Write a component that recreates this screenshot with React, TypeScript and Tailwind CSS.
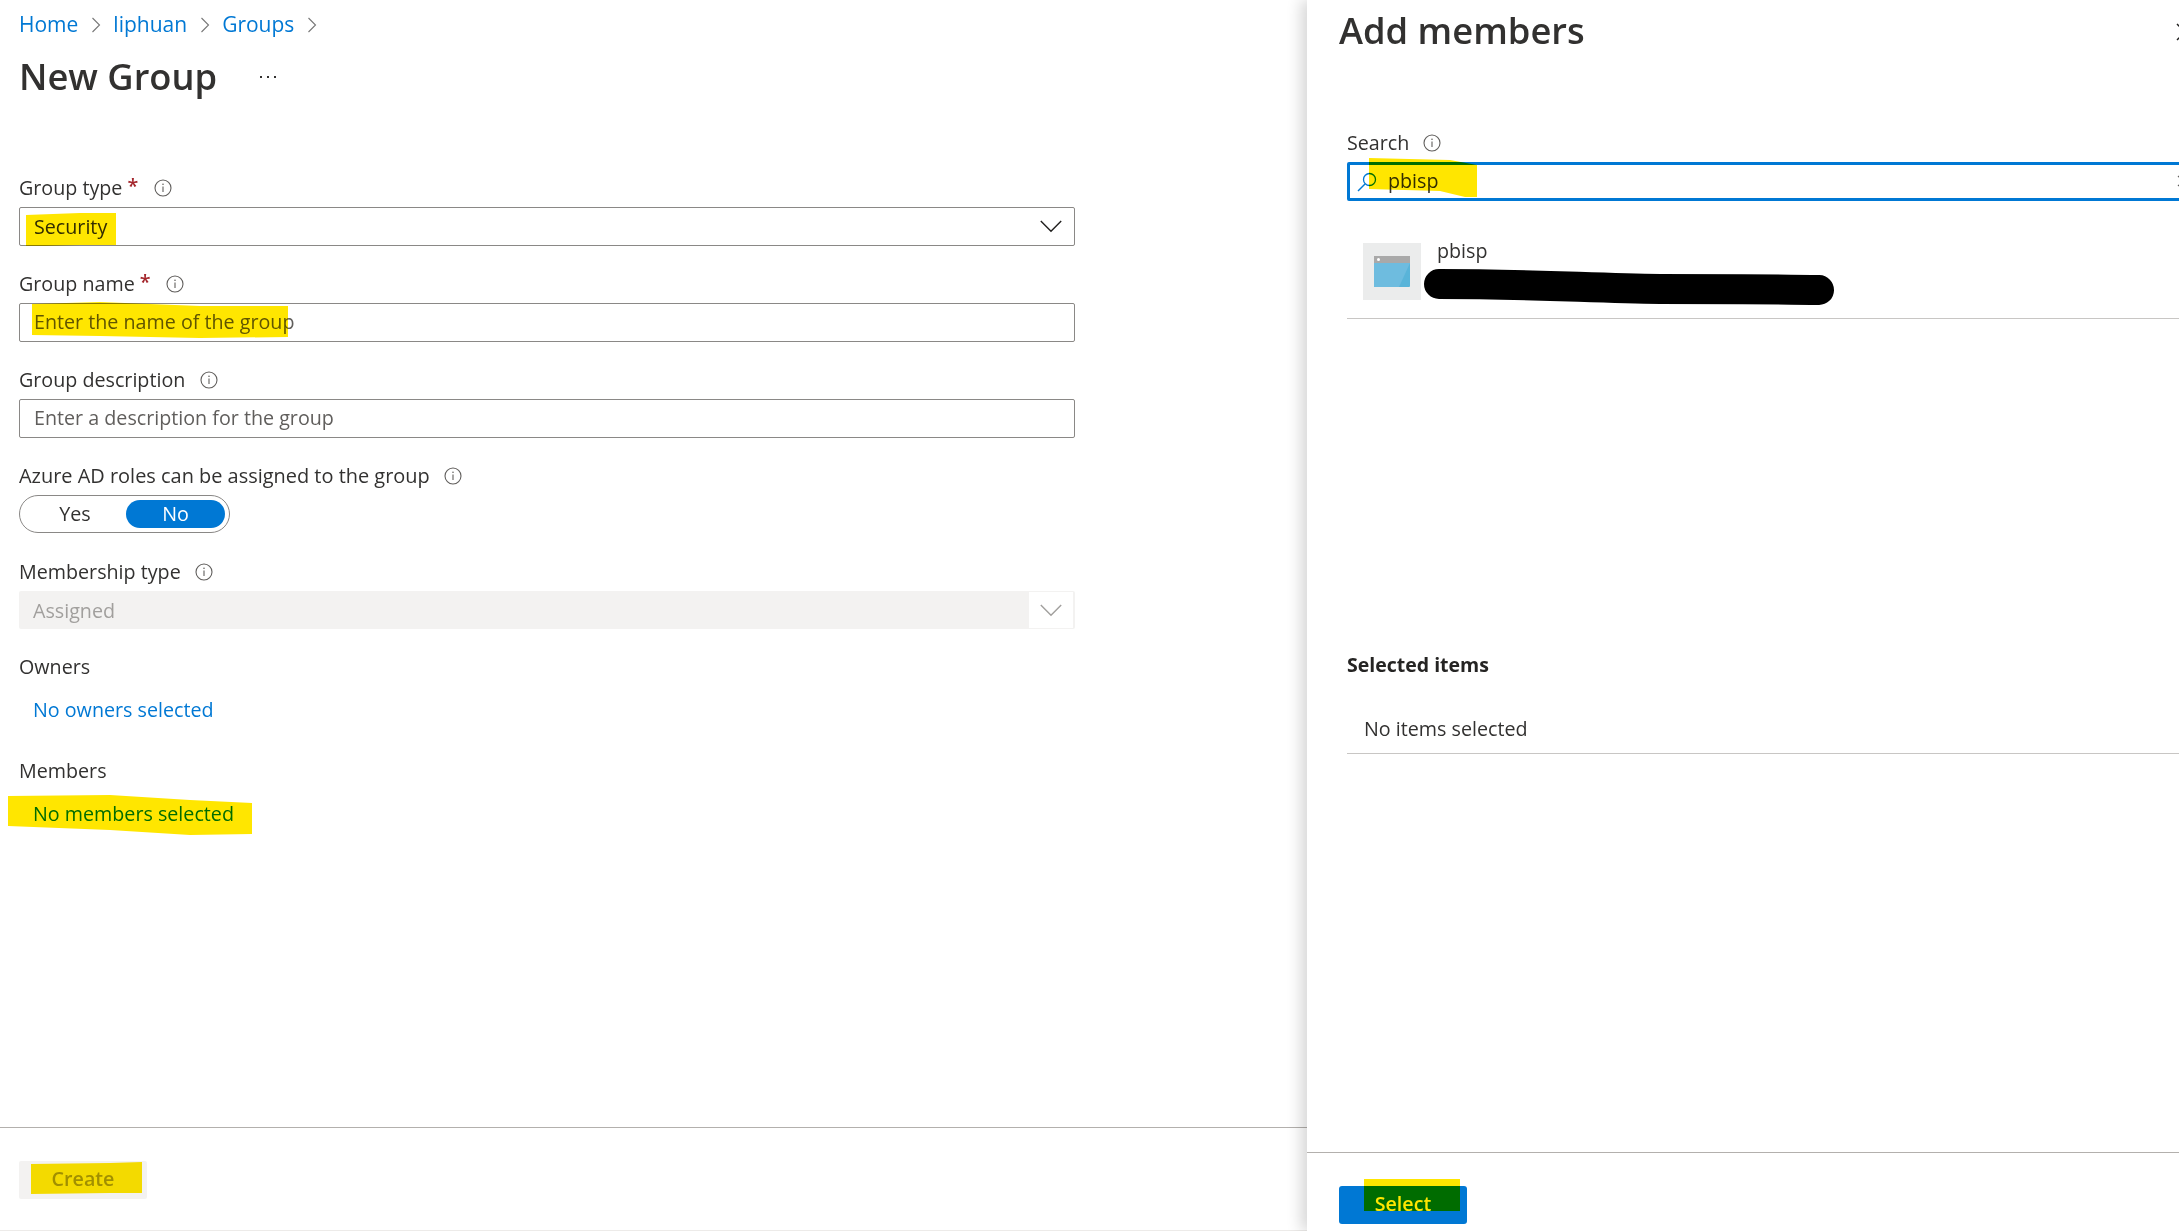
import React from "react";

function Info() {
  return (
    <svg width="18" height="18" viewBox="0 0 18 18" fill="none" className="shrink-0">
      <circle cx="9" cy="9" r="8" stroke="#605e5c" strokeWidth="1.1" />
      <path d="M9 7.6V13" stroke="#605e5c" strokeWidth="1.1" />
      <circle cx="9" cy="5.2" r="0.8" fill="#605e5c" />
    </svg>
  );
}

function Crumb() {
  return (
    <svg width="10" height="16" viewBox="0 0 10 16" fill="none" className="mx-[12.5px]">
      <path d="M1.5 1L8.5 8L1.5 15" stroke="#777" strokeWidth="1.1" />
    </svg>
  );
}

function Chevron({ color }: { color: string }) {
  return (
    <svg width="22" height="13" viewBox="0 0 22 13" fill="none">
      <path d="M0.8 1L11 11.3L21.2 1" stroke={color} strokeWidth="1.4" />
    </svg>
  );
}

function FieldLabel({ text, required, infoGap, size }: { text: string; required?: boolean; infoGap: string; size?: string }) {
  return (
    <div className={"h-[38px] flex items-center text-[#323130] " + (size ?? "")}>
      <span>{text}</span>
      {required && <span className="ml-[5px] font-semibold text-[#a4262c] -mt-[4px]">*</span>}
      <span className={infoGap}>
        <Info />
      </span>
    </div>
  );
}

const boxClass =
  "h-[39px] flex items-center px-[14px] border border-[#8a8886] rounded-[2px] bg-white";

export default function App() {
  return (
    <div
      className="relative w-[2179px] h-[1231px] flex overflow-hidden bg-white text-[19.7px] text-[#323130]"
      style={{ fontFamily: '"Open Sans", "Noto Sans", sans-serif' }}
    >
      {/* Left blade */}
      <div className="w-[1307px] shrink-0 flex flex-col">
        <div className="h-[49px] pl-[19px] flex items-center text-[21px] text-[#0078d4]">
          <span>Home</span>
          <Crumb />
          <span>liphuan</span>
          <Crumb />
          <span>Groups</span>
          <Crumb />
        </div>
        <div className="h-[54px] pl-[19px] flex items-center">
          <span className="text-[36.3px] font-semibold text-[#323130] leading-none">New Group</span>
          <span className="ml-[43px] mt-[2px] flex gap-[5px]">
            <span className="w-[2px] h-[2px] bg-[#323130]" />
            <span className="w-[2px] h-[2px] bg-[#323130]" />
            <span className="w-[2px] h-[2px] bg-[#323130]" />
          </span>
        </div>

        <div className="pl-[19px] mt-[66px] flex-1">
          <div className="w-[1056px]">
            <FieldLabel text="Group type" required infoGap="ml-[16px]" />
            <div className={boxClass + " justify-between pr-[12px]"}>
              <span>Security</span>
              <span className="flex">
                <Chevron color="#201f1e" />
              </span>
            </div>

            <div className="mt-[19px]">
              <FieldLabel text="Group name" required infoGap="ml-[15px]" />
              <div className={boxClass + " pb-[2px] text-[#605e5c]"}>Enter the name of the group</div>
            </div>

            <div className="mt-[19px]">
              <FieldLabel text="Group description" infoGap="ml-[15px]" />
              <div className={boxClass + " pb-[2px] text-[#605e5c]"}>Enter a description for the group</div>
            </div>

            <div className="mt-[19px]">
              <FieldLabel
                text="Azure AD roles can be assigned to the group"
                infoGap="ml-[14px]"
                size="text-[19.95px]"
              />
              <div className="w-[211px] h-[38px] rounded-full border border-[#8a8886] flex items-center p-[4px]">
                <span className="w-[102px] text-center">Yes</span>
                <span className="flex-1 h-[28px] rounded-full bg-[#0078d4] text-white flex items-center justify-center">
                  No
                </span>
              </div>
            </div>

            <div className="mt-[20px]">
              <FieldLabel text="Membership type" infoGap="ml-[14px]" />
              <div className="h-[38px] flex items-stretch pl-[14px] rounded-[2px] bg-[#f3f2f1] text-[#a19f9d]">
                <span className="flex-1 flex items-center pt-[1px]">Assigned</span>
                <span className="w-[44px] m-[1px] mr-[2px] bg-white flex items-center justify-center">
                  <Chevron color="#a19f9d" />
                </span>
              </div>
            </div>

            <div className="mt-[19px] h-[38px] flex items-center">Owners</div>
            <div className="mt-[5px] h-[38px] pl-[14px] flex items-center text-[#0078d4]">No owners selected</div>
            <div className="mt-[23px] h-[38px] flex items-center">Members</div>
            <div className="mt-[5px] h-[38px] pl-[14px] flex items-center text-[#0078d4]">No members selected</div>
          </div>
        </div>

        <div className="h-[104px] border-t border-[#b3b0ad] border-b-[1px] border-b-[#edebe9] pl-[19px] pt-[33px]">
          <div className="w-[128px] h-[38px] pb-[2px] rounded-[2px] bg-[#f3f2f1] text-[#a19f9d] font-semibold flex items-center justify-center">
            Create
          </div>
        </div>
      </div>

      {/* Right blade */}
      <div className="relative z-10 flex-1 min-w-0 flex flex-col bg-white shadow-[-6px_0_14px_rgba(0,0,0,0.16)] overflow-hidden">
        <div className="relative h-[60px] pl-[32px] flex items-center">
          <span className="text-[36.3px] font-semibold text-[#323130] leading-none">Add members</span>
          <svg width="18" height="18" viewBox="0 0 18 18" fill="none" className="absolute left-[869px] top-[23px]">
            <path d="M1 1L17 17M17 1L1 17" stroke="#201f1e" strokeWidth="1.5" />
          </svg>
        </div>

        <div className="mt-[64px] pl-[40px] flex-1 flex flex-col">
          <div className="h-[38px] flex items-center">
            <span>Search</span>
            <span className="ml-[14px]">
              <Info />
            </span>
          </div>
          <div className="relative w-[860px] h-[39px] border-[3px] border-[#0078d4] rounded-[2px] flex items-center pl-[7px]">
            <svg width="20" height="20" viewBox="0 0 20 20" fill="none" className="shrink-0">
              <circle cx="12.5" cy="7.5" r="6" stroke="#0078d4" strokeWidth="1.3" />
              <path d="M8 12L1 19" stroke="#0078d4" strokeWidth="1.4" />
            </svg>
            <span className="ml-[11px] -mt-[2px]">pbisp</span>
            <svg width="12" height="12" viewBox="0 0 12 12" fill="none" className="absolute left-[827px] top-[10px]">
              <path d="M1 1L11 11M11 1L1 11" stroke="#605e5c" strokeWidth="1.2" />
            </svg>
          </div>

          <div className="w-[900px] mt-[42px] h-[76px] border-b border-[#c8c6c4] pl-[16px] flex items-start gap-[16px]">
            <div className="w-[58px] h-[57px] bg-[#ebecec] flex items-center justify-center">
              <svg width="36" height="31" viewBox="0 0 36 31">
                <rect x="0" y="0" width="36" height="31" rx="1" fill="#59b4d9" />
                <path d="M0 0H36V7H0Z" fill="#a9a9a9" />
                <path d="M0 7H36L25 31H0Z" fill="#6ebcdf" />
                <circle cx="4.5" cy="3.5" r="1.5" fill="#fff" />
              </svg>
            </div>
            <div className="-mt-[6px] leading-[28px]">pbisp</div>
          </div>

          <div className="mt-[327px] h-[38px] flex items-center font-bold text-[19.5px] text-[#252423]">Selected items</div>
          <div className="w-[900px] mt-[26px] h-[44px] border-b border-[#c8c6c4] pl-[17px] pb-[6px] flex items-center">
            No items selected
          </div>
        </div>

        <div className="h-[79px] border-t border-[#b3b0ad] pl-[32px] pt-[33px]">
          <div className="w-[128px] h-[38px] pb-[2px] rounded-[3px] bg-[#0078d4] text-white font-semibold flex items-center justify-center">
            Select
          </div>
        </div>
      </div>

      {/* Hand-drawn marker strokes laid over the screenshot */}
      <svg
        width="2179"
        height="1231"
        viewBox="0 0 2179 1231"
        className="absolute inset-0 z-20 pointer-events-none mix-blend-multiply"
      >
        <g fill="#ffe600">
          <path d="M26 215L80 213L116 213V245L80 245L45 246L26 246Z" />
          <path d="M32 304L100 302L200 306L288 306V337L200 338L100 336L32 335Z" />
          <path d="M8 796L110 795L190 800L252 803V834L190 835L110 830L8 826Z" />
          <path d="M1369 158L1450 160L1477 165V197L1465 197L1440 191L1369 189Z" />
          <path d="M31 1164L110 1163L142 1162V1193L110 1193L31 1194Z" />
          <path d="M1364 1179H1460V1211H1364Z" />
        </g>
        <path
          d="M1439 284C1530 284 1590 288 1660 289C1740 289 1780 289 1819 290"
          stroke="#000"
          strokeWidth="30"
          strokeLinecap="round"
          fill="none"
        />
      </svg>
    </div>
  );
}
